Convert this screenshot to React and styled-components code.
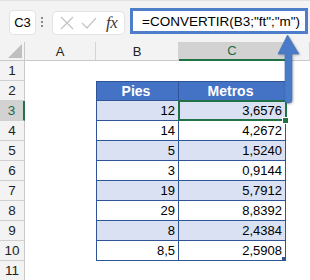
import React from "react";
import styled, { createGlobalStyle } from "styled-components";

const GlobalStyle = createGlobalStyle`
  html, body {
    margin: 0;
    padding: 0;
    background: #ffffff;
  }
  body {
    font-family: "Liberation Sans", Arial, sans-serif;
  }
`;

const data = [
  { n: 1 },
  { n: 2, head: true },
  { n: 3, pies: "12", metros: "3,6576", band: true, selected: true },
  { n: 4, pies: "14", metros: "4,2672" },
  { n: 5, pies: "5", metros: "1,5240", band: true },
  { n: 6, pies: "3", metros: "0,9144" },
  { n: 7, pies: "19", metros: "5,7912", band: true },
  { n: 8, pies: "29", metros: "8,8392" },
  { n: 9, pies: "8", metros: "2,4384", band: true },
  { n: 10, pies: "8,5", metros: "2,5908", last: true },
  { n: 11 },
];

const App = () => {
  return (
    <Page>
      <GlobalStyle />
      <FormulaBar>
        <NameBox>C3</NameBox>
        <Grip>
          <i />
          <i />
          <i />
        </Grip>
        <FuncBox>
          <svg width="14" height="14" viewBox="0 0 14 14">
            <path d="M1 1 L13 13 M13 1 L1 13" stroke="#c4c4c4" strokeWidth="1.3" fill="none" />
          </svg>
          <svg width="16" height="14" viewBox="0 0 16 14">
            <path d="M1 7 L6 12 L15 2" stroke="#c4c4c4" strokeWidth="1.3" fill="none" />
          </svg>
          <Fx>fx</Fx>
        </FuncBox>
        <FormulaInput>=CONVERTIR(B3;"ft";"m")</FormulaInput>
      </FormulaBar>

      <Sheet>
        <HeadRow>
          <Corner>
            <svg width="14" height="14" viewBox="0 0 14 14">
              <path d="M14 0 L14 14 L0 14 Z" fill="#bfbfbf" />
            </svg>
          </Corner>
          <ColHead>A</ColHead>
          <ColHead>B</ColHead>
          <ColHead $active>C</ColHead>
          <ColHead />
        </HeadRow>
        {data.map((r) => (
          <Row key={r.n}>
            <RowHead $active={r.selected}>{r.n}</RowHead>
            <Cell />
            {r.head ? (
              <>
                <TableCell $head $first>Pies</TableCell>
                <TableCell $head>Metros</TableCell>
              </>
            ) : r.pies ? (
              <>
                <TableCell $band={r.band} $first>{r.pies}</TableCell>
                <TableCell $band={r.band} $selected={r.selected} $corner={r.last}>
                  {r.metros}
                </TableCell>
              </>
            ) : (
              <>
                <Cell />
                <Cell />
              </>
            )}
            <Cell />
          </Row>
        ))}
      </Sheet>

      <Arrow width="24" height="70" viewBox="0 0 24 70">
        <path
          d="M10.5 0 L22 19 L15 19 L15 65 Q15 68 12 68 L10 68 Q8 68 8 65 L8 19 L1 19 Z"
          fill="#4a7bc8"
          stroke="#3f6db8"
          strokeWidth="0.6"
        />
      </Arrow>
    </Page>
  );
};

export default App;

const Page = styled.div`
  position: relative;
  width: 310px;
  height: 280px;
  overflow: hidden;
  background: #ffffff;
`;

const FormulaBar = styled.div`
  display: flex;
  align-items: center;
  height: 42px;
  padding: 0 2px 0 9px;
  box-sizing: border-box;
  background: #f3f3f3;
  border-top: 1px solid #e2e2e2;
`;

const NameBox = styled.div`
  width: 27px;
  height: 25px;
  box-sizing: border-box;
  display: flex;
  align-items: center;
  justify-content: center;
  background: #ffffff;
  border: 1px solid #e3e3e3;
  border-radius: 4px;
  font-size: 13px;
  color: #000;
  margin-top: 1px;
`;

const Grip = styled.div`
  display: flex;
  flex-direction: column;
  gap: 2px;
  margin: 0 9px 0 5px;

  i {
    display: block;
    width: 2px;
    height: 2px;
    background: #8a8a8a;
  }
`;

const FuncBox = styled.div`
  width: 73px;
  height: 24px;
  box-sizing: border-box;
  display: flex;
  align-items: center;
  gap: 7px;
  padding: 0 4px 0 7px;
  background: #ffffff;
  border: 1px solid #e3e3e3;
  border-radius: 5px;
  margin-top: 2px;
`;

const Fx = styled.span`
  font-family: "Liberation Serif", "Times New Roman", serif;
  font-style: italic;
  font-size: 17px;
  color: #3c3c3c;
  margin-left: 2px;
  letter-spacing: -0.5px;
`;

const FormulaInput = styled.div`
  flex: 1;
  height: 26px;
  margin-left: 5px;
  box-sizing: border-box;
  display: flex;
  align-items: center;
  padding-left: 9px;
  background: #ffffff;
  border: 3px solid #4e7ec9;
  font-size: 13.5px;
  color: #000;
  white-space: nowrap;
  margin-top: -1px;
`;

const Sheet = styled.div`
  display: flex;
  flex-direction: column;
`;

const HeadRow = styled.div`
  display: grid;
  grid-template-columns: 25px 71px 83px 107px 1fr;
  height: 19px;
  background: #f3f3f3;
`;

const Corner = styled.div`
  display: flex;
  align-items: flex-end;
  justify-content: flex-end;
  padding: 0 2px 2px 0;
  border-right: 1px solid #c9c9c9;
  border-bottom: 1px solid #c9c9c9;
  box-sizing: border-box;
`;

const ColHead = styled.div`
  display: flex;
  align-items: center;
  justify-content: center;
  box-sizing: border-box;
  font-size: 13px;
  color: ${(p) => (p.$active ? "#1e6b42" : "#222")};
  background: ${(p) => (p.$active ? "#d2d2d2" : "#f3f3f3")};
  border-right: 1px solid #d4d4d4;
  border-bottom: ${(p) => (p.$active ? "2px solid #217346" : "1px solid #c9c9c9")};
`;

const Row = styled.div`
  display: grid;
  grid-template-columns: 25px 71px 83px 107px 1fr;
  height: 20px;
`;

const RowHead = styled.div`
  display: flex;
  align-items: center;
  justify-content: center;
  box-sizing: border-box;
  font-size: 13.5px;
  color: ${(p) => (p.$active ? "#1e6b42" : "#222")};
  background: ${(p) => (p.$active ? "#d2d2d2" : "#f3f3f3")};
  border-bottom: 1px solid #d0d0d0;
  border-right: ${(p) => (p.$active ? "2px solid #217346" : "1px solid #c9c9c9")};
`;

const Cell = styled.div`
  background: #ffffff;
`;

const TableCell = styled.div`
  position: relative;
  display: flex;
  align-items: center;
  justify-content: ${(p) => (p.$head ? "center" : "flex-end")};
  padding-right: 3px;
  box-sizing: border-box;
  font-size: ${(p) => (p.$head ? "14px" : "13px")};
  font-weight: ${(p) => (p.$head ? 700 : 400)};
  color: ${(p) => (p.$head ? "#ffffff" : "#000000")};
  background: ${(p) => (p.$head ? "#4472c4" : p.$band ? "#d9e1f2" : "#ffffff")};
  border-bottom: 1px solid #2f5597;
  border-right: 1px solid #2f5597;
  border-left: ${(p) => (p.$first ? "1px solid #2f5597" : "none")};
  border-top: ${(p) => (p.$head ? "1px solid #2f5597" : "none")};

  ${(p) =>
    p.$selected &&
    `
    &::after {
      content: "";
      position: absolute;
      left: -1px;
      top: -1px;
      right: -2px;
      bottom: -1px;
      border: 2px solid #217346;
    }
    &::before {
      content: "";
      position: absolute;
      right: -4px;
      bottom: -4px;
      width: 5px;
      height: 5px;
      background: #217346;
      border: 1px solid #ffffff;
      z-index: 1;
    }
  `}

  ${(p) =>
    p.$corner &&
    `
    &::after {
      content: "";
      position: absolute;
      right: 0;
      bottom: 0;
      width: 3px;
      height: 3px;
      background: #2f5597;
    }
  `}
`;

const Arrow = styled.svg`
  position: absolute;
  left: 277px;
  top: 35px;
  filter: drop-shadow(1px 1px 1px rgba(0, 0, 0, 0.25));
`;
